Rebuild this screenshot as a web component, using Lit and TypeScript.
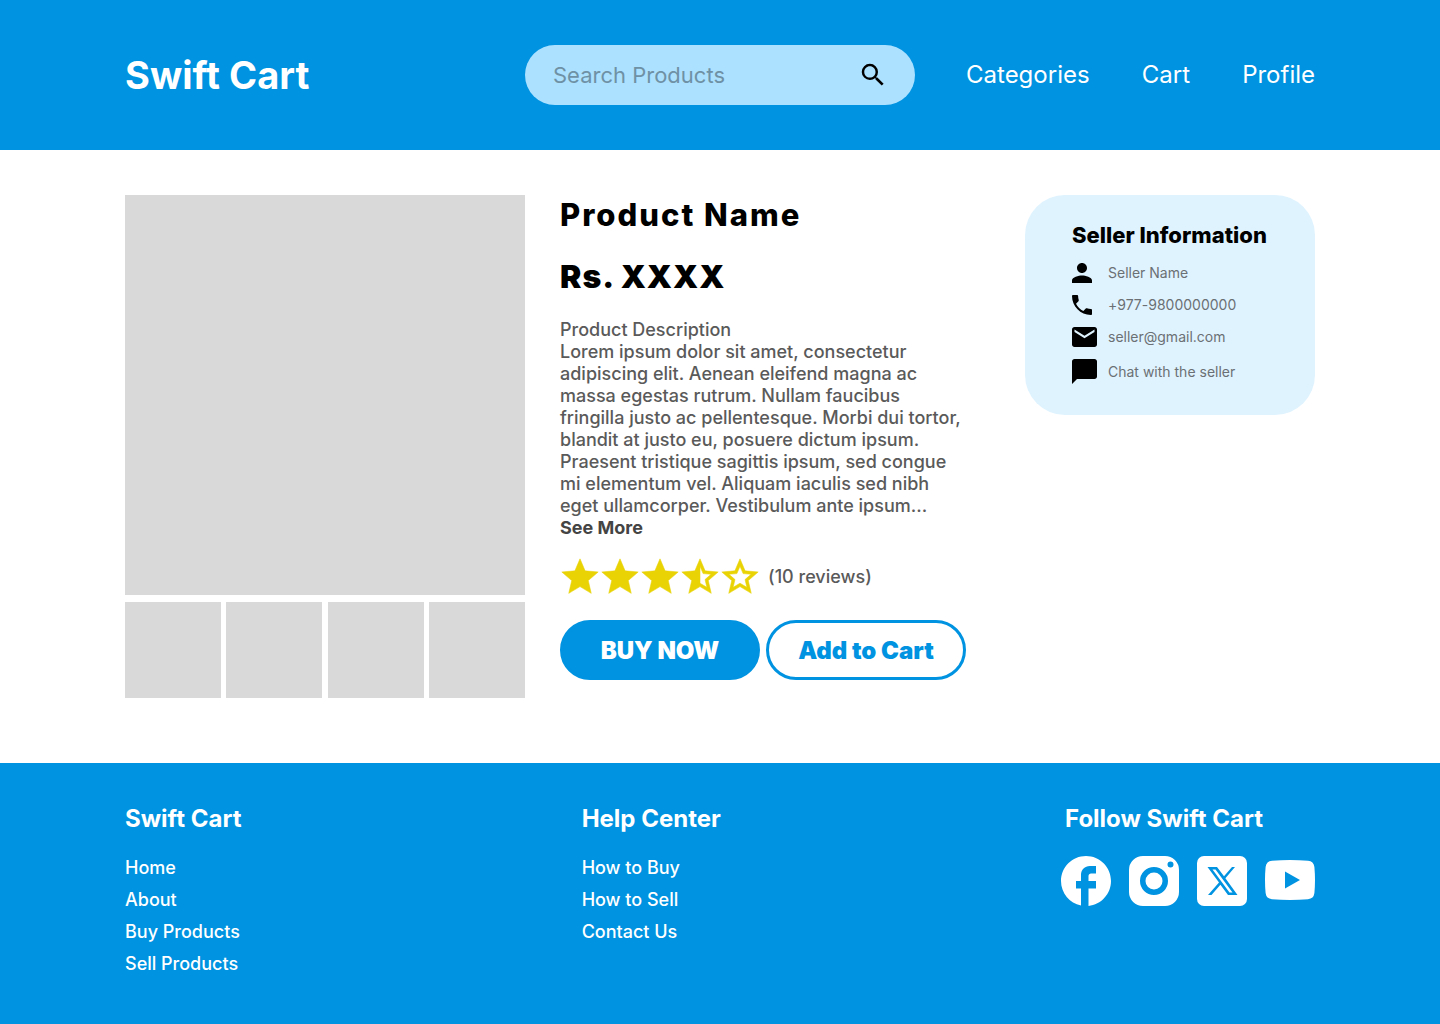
import { LitElement, html, css, svg } from "lit";
import { customElement } from "lit/decorators.js";

const STAR = "M12 17.27L18.18 21l-1.64-7.03L22 9.24l-7.19-.61L12 2 9.19 8.63 2 9.24l5.46 4.73L5.82 21z";
const STAR_HALF = "M22 9.24l-7.19-.62L12 2 9.19 8.63 2 9.24l5.46 4.73L5.82 21 12 17.27 18.18 21l-1.63-7.03L22 9.24zM12 15.4V6.1l1.71 4.04 4.38.38-3.32 2.88 1 4.28L12 15.4z";
const STAR_EMPTY = "M22 9.24l-7.19-.62L12 2 9.19 8.63 2 9.24l5.46 4.73L5.82 21 12 17.27 18.18 21l-1.63-7.03L22 9.24zM12 15.4l-3.76 2.27 1-4.28-3.32-2.88 4.38-.38L12 6.1l1.71 4.04 4.38.38-3.32 2.88 1 4.28L12 15.4z";
const STARS = [STAR, STAR, STAR, STAR_HALF, STAR_EMPTY];

const CONTACTS = [
  { text: "Seller Name", icon: svg`<svg width="20" height="20" viewBox="4 4 16 16"><path d="M12 12c2.21 0 4-1.79 4-4s-1.79-4-4-4-4 1.79-4 4 1.79 4 4 4zm0 2c-2.67 0-8 1.34-8 4v2h16v-2c0-2.66-5.33-4-8-4z"/></svg>` },
  { text: "+977-9800000000", icon: svg`<svg width="20" height="20" viewBox="3 3 18 18"><path d="M6.62 10.79c1.44 2.83 3.76 5.14 6.59 6.59l2.2-2.2c.28-.28.67-.36 1.02-.25 1.12.37 2.32.57 3.57.57.55 0 1 .45 1 1V20c0 .55-.45 1-1 1-9.39 0-17-7.61-17-17 0-.55.45-1 1-1h3.5c.55 0 1 .45 1 1 0 1.25.2 2.45.57 3.57.11.35.03.74-.25 1.02l-2.2 2.2z"/></svg>` },
  { text: "seller@gmail.com", icon: svg`<svg width="25" height="20" viewBox="2 4 20 16"><path d="M20 4H4c-1.1 0-1.99.9-1.99 2L2 18c0 1.1.9 2 2 2h16c1.1 0 2-.9 2-2V6c0-1.1-.9-2-2-2zm0 4l-8 5-8-5V6l8 5 8-5v2z"/></svg>` },
  { text: "Chat with the seller", icon: svg`<svg width="25" height="25" viewBox="2 2 20 20"><path d="M20 2H4c-1.1 0-2 .9-2 2v18l4-4h14c1.1 0 2-.9 2-2V4c0-1.1-.9-2-2-2z"/></svg>` },
];

const SOCIALS = [
  { name: "Facebook", icon: svg`<svg width="50" height="50" viewBox="2 2 20 20"><path d="M22 12c0-5.52-4.48-10-10-10S2 6.48 2 12c0 4.84 3.44 8.87 8 9.8V15H8v-3h2V9.5C10 7.57 11.57 6 13.5 6H16v3h-2c-.55 0-1 .45-1 1v2h3v3h-3v6.95c5.05-.5 9-4.76 9-9.95z"/></svg>` },
  { name: "Instagram", icon: svg`<svg width="50" height="50" viewBox="0 0 50 50"><path fill-rule="evenodd" d="M14 0H36A14 14 0 0 1 50 14V36A14 14 0 0 1 36 50H14A14 14 0 0 1 0 36V14A14 14 0 0 1 14 0ZM25 11A14 14 0 1 0 25 39A14 14 0 1 0 25 11ZM25 16.500A8.500 8.500 0 1 1 25 33.500A8.500 8.500 0 1 1 25 16.500ZM41.500 5.500A3 3 0 1 0 41.500 11.500A3 3 0 1 0 41.500 5.500Z"/></svg>` },
  { name: "X", icon: svg`<svg width="50" height="50" viewBox="0 0 50 50"><rect width="50" height="50" rx="7"/><path class="cut" fill-rule="evenodd" d="M10.500 11H20L27 20.300L35 11H38L28.400 22.200L40.500 39H31L23.400 28.800L14.500 39H11L22 26.600ZM15.500 13.500L32.500 36.500H35.500L18.500 13.500Z"/></svg>` },
  { name: "YouTube", icon: svg`<svg width="50" height="50" viewBox="0 0 50 50"><path fill-rule="evenodd" d="M7 4.800Q25 3.200 43 4.800Q48.700 5.300 49.400 11Q50.600 24 49.400 37Q48.700 42.700 43 43.200Q25 44.800 7 43.200Q1.300 42.700 .6 37Q-.6 24 .6 11Q1.300 5.300 7 4.800ZM20 15.500V32.500L35 24Z"/></svg>` },
];

@customElement("app-root")
export class AppRoot extends LitElement {
  static styles = css`
    :host { display: flex; flex-direction: column; min-height: 100vh; font-family: Inter, sans-serif; font-variant-ligatures: none; color: #000; background: #fff; }
    * { box-sizing: border-box; }
    h1, h2, h3, p, ul { margin: 0; padding: 0; }
    ul { list-style: none; }
    a { color: inherit; text-decoration: none; }
    svg { display: block; fill: currentColor; }
    button { font-family: inherit; cursor: pointer; }
    .header { display: grid; grid-template-columns: 400px 390px 1fr; align-items: center; height: 150px; padding: 0 125px; background: #0093e1; color: #fff; }
    .brand { font-size: 38px; font-weight: 700; line-height: 48px; }
    .search { display: flex; align-items: center; height: 60px; padding: 0 27px 0 28px; border-radius: 30px; background: #ace1ff; }
    .search input { flex: 1; min-width: 0; border: 0; padding: 0; outline: 0; background: none; font-family: inherit; font-size: 22px; color: #333; }
    .search input::placeholder { color: #6f91a5; opacity: 1; }
    .search button { border: 0; padding: 0; background: none; color: #000; }
    .nav { display: flex; justify-content: space-between; padding-left: 51px; font-size: 24px; line-height: 30px; }
    .main { display: grid; grid-template-columns: 400px 1fr 290px; column-gap: 35px; align-items: start; padding: 45px 125px 65px; flex: 1; }
    .gallery { display: grid; grid-template-columns: repeat(4, 96px); justify-content: space-between; row-gap: 7px; }
    .photo { grid-column: 1 / -1; aspect-ratio: 1; background: #d9d9d9; }
    .thumb { aspect-ratio: 1; background: #d9d9d9; border: 0; padding: 0; }
    .details { max-width: 406px; }
    .title { font-size: 31px; font-weight: 800; line-height: 40px; letter-spacing: 2px; }
    .price { margin-top: 22px; font-size: 32px; font-weight: 900; line-height: 40px; letter-spacing: 1px; }
    .text { margin-top: 22px; font-size: 18px; font-weight: 500; line-height: 22px; color: #5a5a5a; }
    .more { font-weight: 700; color: #444; }
    .rating { display: flex; align-items: center; margin-top: 18px; font-size: 18px; font-weight: 500; line-height: 22px; color: #5a5a5a; }
    .stars { display: flex; margin-right: 8px; color: #e9d305; }
    .stars svg { stroke: currentColor; stroke-width: 0.3; stroke-linejoin: round; }
    .actions { display: flex; gap: 6px; margin-top: 23px; }
    .btn { width: 200px; height: 60px; padding: 0; border: 3px solid #0093e1; border-radius: 30px; font-size: 24px; font-weight: 900; color: #0093e1; background: #fff; }
    .btn.primary { background: #0093e1; color: #fff; }
    .seller { padding: 26px 20px 30px 47px; min-height: 220px; border-radius: 40px; background: #dff3ff; }
    .seller h2 { font-size: 22px; font-weight: 800; line-height: 28px; white-space: nowrap; }
    .contacts { display: flex; flex-direction: column; gap: 12px; margin-top: 14px; }
    .contacts li { display: grid; grid-template-columns: 36px 1fr; align-items: center; font-size: 14px; line-height: 20px; }
    .contacts span { color: #6b7074; }
    .footer { display: flex; justify-content: space-between; min-height: 261px; padding: 41px 125px; background: #0093e1; color: #fff; }
    .footer h3 { font-size: 24px; font-weight: 700; line-height: 30px; }
    .links { display: flex; flex-direction: column; gap: 10px; margin-top: 23px; font-size: 18px; font-weight: 500; line-height: 22px; }
    .follow h3 { padding-left: 4px; }
    .socials { display: flex; gap: 18px; margin-top: 22px; }
    .cut { fill: #0093e1; }
  `;

  private links(title: string, items: string[]) {
    return html`<section><h3>${title}</h3><ul class="links">${items.map((t) => html`<li><a href="#">${t}</a></li>`)}</ul></section>`;
  }

  render() {
    return html`
      <header class="header">
        <a class="brand" href="#">Swift Cart</a>
        <form class="search" role="search">
          <input type="search" aria-label="Search Products" placeholder="Search Products" />
          <button type="button" aria-label="Search"><svg width="30" height="30" viewBox="0 0 24 24"><path d="M15.5 14h-.79l-.28-.27A6.471 6.471 0 0 0 16 9.500 6.500 6.500 0 1 0 9.500 16c1.610 0 3.090-.590 4.230-1.570l.270.280v.790l5 4.990L20.490 19l-4.990-5zm-6 0C7.010 14 5 11.990 5 9.500S7.010 5 9.500 5 14 7.010 14 9.500 11.990 14 9.500 14z"/></svg></button>
        </form>
        <nav class="nav"><a href="#">Categories</a><a href="#">Cart</a><a href="#">Profile</a></nav>
      </header>
      <main class="main">
        <section class="gallery" aria-label="Product photos">
          <div class="photo"></div>
          ${[1, 2, 3, 4].map((n) => html`<button class="thumb" aria-label="Photo ${n}"></button>`)}
        </section>
        <section class="details">
          <h1 class="title">Product Name</h1>
          <p class="price">Rs. XXXX</p>
          <div class="text">
            <p>Product Description</p>
            <p>Lorem ipsum dolor sit amet, consectetur adipiscing elit. Aenean eleifend magna ac massa egestas rutrum. Nullam faucibus fringilla justo ac pellentesque. Morbi dui tortor, blandit at justo eu, posuere dictum ipsum. Praesent tristique sagittis ipsum, sed congue mi elementum vel. Aliquam iaculis sed nibh eget ullamcorper. Vestibulum ante ipsum...</p>
            <a class="more" href="#">See More</a>
          </div>
          <div class="rating">
            <span class="stars" role="img" aria-label="3.5 out of 5 stars">${STARS.map((d) => html`<svg width="40" height="40" viewBox="1 1 22 22"><path d=${d}></path></svg>`)}</span>
            <span>(10 reviews)</span>
          </div>
          <div class="actions"><button class="btn primary">BUY NOW</button><button class="btn">Add to Cart</button></div>
        </section>
        <aside class="seller">
          <h2>Seller Information</h2>
          <ul class="contacts">${CONTACTS.map((c) => html`<li>${c.icon}<span>${c.text}</span></li>`)}</ul>
        </aside>
      </main>
      <footer class="footer">
        ${this.links("Swift Cart", ["Home", "About", "Buy Products", "Sell Products"])}
        ${this.links("Help Center", ["How to Buy", "How to Sell", "Contact Us"])}
        <section class="follow">
          <h3>Follow Swift Cart</h3>
          <div class="socials">${SOCIALS.map((s) => html`<a href="#" aria-label=${s.name}>${s.icon}</a>`)}</div>
        </section>
      </footer>
    `;
  }
}
